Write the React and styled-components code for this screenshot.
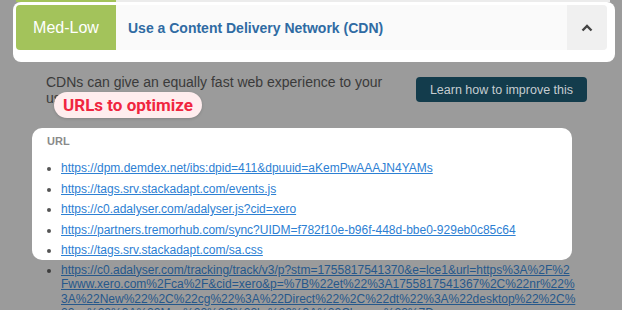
import React from "react";
import styled, { createGlobalStyle } from "styled-components";

const GlobalStyle = createGlobalStyle`
    html, body {
        margin: 0;
        padding: 0;
        background: #9b9b9b;
        font-family: "Liberation Sans", Arial, sans-serif;
        overflow: hidden;
    }
`;

const Page = styled.div`
    position: relative;
    width: 622px;
    height: 310px;
    overflow: hidden;
`;

// bottom edge of the previous item peeking in at the top
const Peek = styled.div`
    display: flex;
    height: 2px;
    padding-left: 16px;
`;

const PeekBlock = styled.div`
    width: ${({w}) => w}px;
    background: ${({bg}) => bg};
`;

const HeaderCard = styled.div`
    margin-left: 13px;
    width: 602px;
    box-sizing: border-box;
    padding: 3px 8px 12px 3px;
    background: #fff;
    border-radius: 8px;
`;

const ItemRow = styled.div`
    display: flex;
    height: 45px;
    background: #fafafa;
    border-radius: 4px;
    overflow: hidden;
`;

const Badge = styled.div`
    width: 100px;
    display: flex;
    align-items: center;
    justify-content: center;
    background: #a3c35b;
    color: #fff;
    font-size: 16px;
`;

const Title = styled.div`
    flex: 1;
    display: flex;
    align-items: center;
    padding-left: 12px;
    color: #2f6ba3;
    font-weight: bold;
    font-size: 14px;
`;

const Toggle = styled.div`
    width: 40px;
    display: flex;
    align-items: center;
    justify-content: center;
    background: #f0f0f0;
`;

const Intro = styled.div`
    display: flex;
    justify-content: space-between;
    align-items: flex-start;
    margin-top: 12px;
    padding: 0 35px 0 46px;
`;

const IntroText = styled.p`
    margin: 0;
    width: 350px;
    font-size: 14px;
    line-height: 16px;
    color: #3a3a3a;
`;

const LearnButton = styled.button`
    margin-top: 3px;
    width: 171px;
    height: 25px;
    border: none;
    border-radius: 4px;
    background: #133c4c;
    color: #c6cdd1;
    font-family: "Liberation Sans", Arial, sans-serif;
    font-size: 12.5px;
    padding: 0;
`;

const Label = styled.div`
    position: absolute;
    left: 54px;
    top: 92px;
    width: 148px;
    height: 26px;
    box-sizing: border-box;
    display: flex;
    align-items: center;
    justify-content: center;
    border-radius: 13px;
    background: #ffedee;
    color: #f0253f;
    font-family: Roboto, "Liberation Sans", sans-serif;
    font-weight: 700;
    font-size: 17px;
    box-shadow: 0 1px 3px rgba(0, 0, 0, 0.15);
`;

const UrlCard = styled.div`
    margin: 22px 0 0 32px;
    width: 540px;
    box-sizing: border-box;
    padding: 7px 15px 2px;
    background: #fff;
    border-radius: 10px;
`;

const ColumnHead = styled.div`
    font-size: 11px;
    line-height: 13px;
    font-weight: bold;
    color: #8a8a8a;
`;

const UrlList = styled.ul`
    margin: ${({rest}) => (rest ? '3px 0 0 47px' : '13px 0 0 0')};
    padding-left: 14px;
    width: ${({rest}) => (rest ? '515px' : 'auto')};
    font-size: 12px;
    line-height: 14.5px;
    color: ${({rest}) => (rest ? '#3c3c3c' : '#555')};

    li + li {
        margin-top: 6px;
    }
`;

const UrlLink = styled.a`
    color: ${({dim}) => (dim ? '#26588b' : '#2d80d3')};
    text-decoration: underline;
    word-break: break-all;
`;

const highlighted = [
    "https://dpm.demdex.net/ibs:dpid=411&dpuuid=aKemPwAAAJN4YAMs",
    "https://tags.srv.stackadapt.com/events.js",
    "https://c0.adalyser.com/adalyser.js?cid=xero",
    "https://partners.tremorhub.com/sync?UIDM=f782f10e-b96f-448d-bbe0-929eb0c85c64",
    "https://tags.srv.stackadapt.com/sa.css"
];

const rest = [
    "https://c0.adalyser.com/tracking/track/v3/p?stm=1755817541370&e=lce1&url=https%3A%2F%2Fwww.xero.com%2Fca%2F&cid=xero&p=%7B%22et%22%3A1755817541367%2C%22nr%22%3A%22New%22%2C%22cg%22%3A%22Direct%22%2C%22dt%22%3A%22desktop%22%2C%22os%22%3A%22Mac%22%2C%22br%22%3A%22Chrome%22%7D"
];

const ChevronUp = () => (
    <svg width="12" height="8" viewBox="0 0 12 8">
        <polyline points="1.5,6.5 6,2 10.5,6.5" fill="none" stroke="#444" strokeWidth="2.4" />
    </svg>
);

export default function App() {
    return (
        <Page>
            <GlobalStyle/>
            <Peek>
                <PeekBlock w={100} bg="#a3c35b"/>
                <PeekBlock w={494} bg="#ececec"/>
            </Peek>
            <HeaderCard>
                <ItemRow>
                    <Badge>Med-Low</Badge>
                    <Title>Use a Content Delivery Network (CDN)</Title>
                    <Toggle><ChevronUp/></Toggle>
                </ItemRow>
            </HeaderCard>
            <Intro>
                <IntroText>
                    CDNs can give an equally fast web experience to your users around the world.
                </IntroText>
                <LearnButton>Learn how to improve this</LearnButton>
            </Intro>
            <Label>URLs to optimize</Label>
            <UrlCard>
                <ColumnHead>URL</ColumnHead>
                <UrlList>
                    {highlighted.map(url => (
                        <li key={url}><UrlLink href="#">{url}</UrlLink></li>
                    ))}
                </UrlList>
            </UrlCard>
            <UrlList rest>
                {rest.map(url => (
                    <li key={url}><UrlLink dim href="#">{url}</UrlLink></li>
                ))}
            </UrlList>
        </Page>
    );
}
